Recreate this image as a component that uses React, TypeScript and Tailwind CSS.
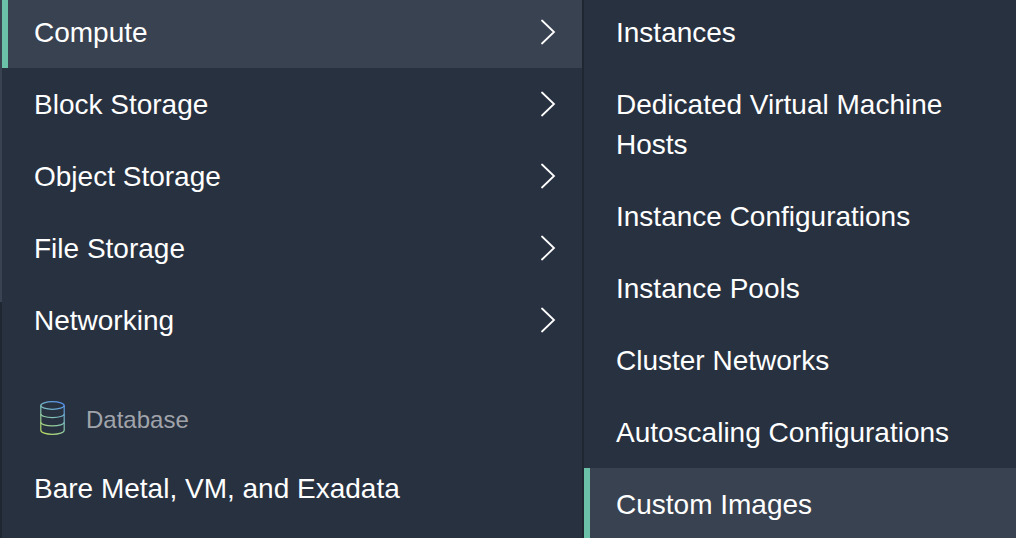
const services = ["Compute", "Block Storage", "Object Storage", "File Storage", "Networking"];
const databases = ["Bare Metal, VM, and Exadata"];
const pages = [
  "Instances",
  "Dedicated Virtual Machine Hosts",
  "Instance Configurations",
  "Instance Pools",
  "Cluster Networks",
  "Autoscaling Configurations",
  "Custom Images",
];

function Chevron() {
  return (
    <svg className="h-7 w-4 shrink-0" viewBox="0 0 16 28" fill="none" stroke="currentColor" strokeWidth="1.8" strokeLinecap="round" aria-hidden="true">
      <path d="M2 2.5L14 14L2 25.5" />
    </svg>
  );
}

function DatabaseIcon() {
  return (
    <svg className="h-9 w-7 shrink-0" viewBox="0 0 28 36" fill="none" stroke="url(#db)" strokeWidth="1.2" aria-hidden="true">
      <defs>
        <linearGradient id="db" x1="3" y1="32" x2="25" y2="3" gradientUnits="userSpaceOnUse">
          <stop stopColor="#b8dc62" />
          <stop offset="0.5" stopColor="#84c4b4" />
          <stop offset="1" stopColor="#5592ea" />
        </linearGradient>
      </defs>
      <ellipse cx="16.5" cy="5.5" rx="11.7" ry="3.8" transform="translate(-2 0)" />
      <path d="M2.8 5.5V30.3C2.8 32.6 8 34.3 14.5 34.3S26.2 32.6 26.2 30.3V5.5" />
      <path d="M2.8 14C2.8 16 8 17.6 14.5 17.6S26.2 16 26.2 14M2.8 22.3C2.8 24.3 8 25.9 14.5 25.9S26.2 24.3 26.2 22.3" />
    </svg>
  );
}

export default function App() {
  return (
    <div className="flex h-screen overflow-hidden bg-[#283140] font-['Liberation_Sans',Arial,sans-serif] text-[28px] leading-10 text-white">
      <div className="flex w-0.5 shrink-0 flex-col" aria-hidden="true">
        <div className="h-[302px] bg-[#394250]" />
        <div className="flex-1 bg-[#1f2832]" />
      </div>
      <nav aria-label="Services" className="-mt-1 w-[580px] shrink-0">
        <ul>
          {services.map((name) => (
            <li key={name}>
              <button
                type="button"
                aria-expanded={name === "Compute"}
                className="flex w-full items-center justify-between border-l-6 border-transparent py-4 pr-[26px] pl-[26px] text-left aria-expanded:border-[#6ac1a8] aria-expanded:bg-[#394250]"
              >
                <span className="pt-0.5 leading-[38px]">{name}</span>
                <Chevron />
              </button>
            </li>
          ))}
        </ul>
        <h2 className="mt-7 flex h-[68px] items-center gap-5 pl-9 text-2xl text-[#a0a4aa]">
          <DatabaseIcon />
          <span className="pt-1">Database</span>
        </h2>
        <ul>
          {databases.map((name) => (
            <li key={name}>
              <button type="button" className="flex w-full items-center py-4 pl-8 text-left">
                <span className="pt-0.5 leading-[38px]">{name}</span>
              </button>
            </li>
          ))}
        </ul>
      </nav>
      <nav aria-label="Compute" className="min-w-0 flex-1 border-l-2 border-[#1f2832]">
        <ul className="-mt-1">
          {pages.map((name) => (
            <li key={name}>
              <a
                href="#"
                aria-current={name === "Custom Images" ? "page" : undefined}
                className="block border-l-6 border-transparent pt-[17px] pr-8 pb-[15px] pl-[26px] aria-[current=page]:border-[#6ac1a8] aria-[current=page]:bg-[#394250]"
              >
                {name}
              </a>
            </li>
          ))}
        </ul>
      </nav>
    </div>
  );
}
